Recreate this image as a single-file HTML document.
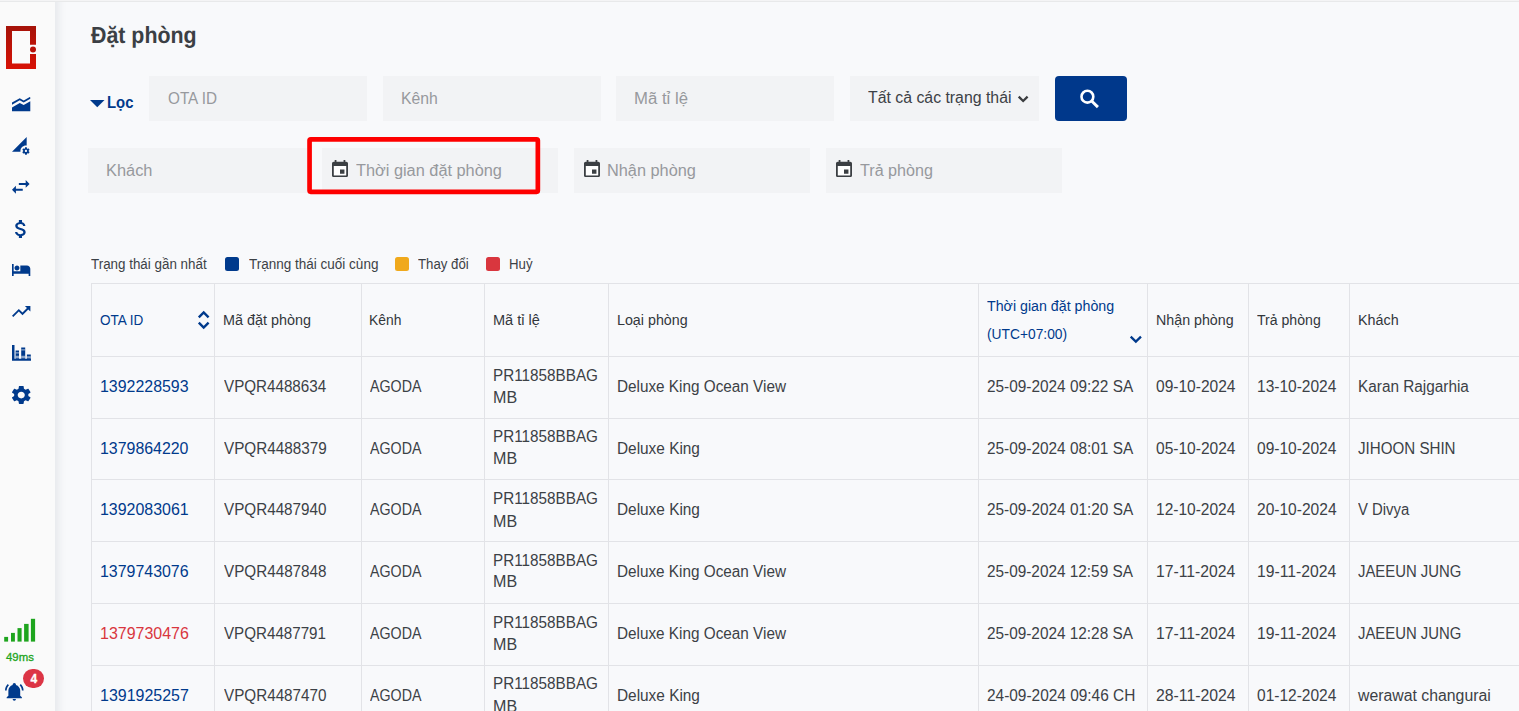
<!DOCTYPE html>
<html lang="vi">
<head>
<meta charset="utf-8">
<title>Đặt phòng</title>
<style>
*{box-sizing:border-box;margin:0;padding:0}
html,body{width:1519px;height:711px;overflow:hidden;background:#f8f9fb}
body{font-family:"Liberation Sans",sans-serif;color:#3c4146;position:relative;font-size:16px}
.topline{position:absolute;left:0;top:0;width:1519px;height:2px;background:linear-gradient(#f4f4f5 0,#f4f4f5 50%,#e8e9ea 50%,#e8e9ea 100%);z-index:5}
.side{position:absolute;left:0;top:-20px;width:55px;height:760px;background:#fafafa;box-shadow:2px 0 10px rgba(30,40,60,.10)}
svg{position:absolute;display:block;overflow:visible}
.ms{position:absolute;left:6px;top:651px;font-size:11px;color:#1ea51e;line-height:13px;white-space:nowrap;-webkit-text-stroke:.3px #1ea51e}
.badge{position:absolute;left:23px;top:669px;width:21px;height:19px;border-radius:10px;background:#dc3545}
.badge span{position:absolute;left:7.400px;top:.9px;-webkit-text-stroke:.3px #fff;color:#fff;font-size:12px;font-weight:bold;line-height:19px}
h1{position:absolute;left:90.5px;top:19.5px;font-size:23.4px;transform:rotate(0.03deg);transform-origin:0 50%;line-height:30px;font-weight:bold;color:#3b3f44;white-space:nowrap}
.loc{position:absolute;left:106.5px;top:91.7px;font-size:16px;font-weight:bold;color:#003a8c;line-height:22px;white-space:nowrap}
.inp{position:absolute;height:45px;background:#f2f3f5;color:#97999d;font-size:16px;line-height:45px;white-space:nowrap}
.inp>span{position:absolute;top:0}
.sel{color:#3c4146}
.btn{position:absolute;left:1055px;top:76px;width:72px;height:45px;background:#00388b;border-radius:4px}
.red{position:absolute;left:307px;top:137px;width:233px;height:57px;border:4.5px solid #fe0000;border-radius:3px}
.legend{position:absolute;top:254px;font-size:14px;line-height:20px;color:#3c4146;white-space:nowrap}
.sq{position:absolute;top:257.200px;width:13.500px;height:13.800px;border-radius:2.500px}
table{position:absolute;left:91px;top:283px;border-collapse:separate;border-spacing:0;table-layout:fixed;width:1500px}
th,td{border-left:1px solid #e2e3e7;border-top:1px solid #e2e3e7;padding:0 0 0 8px;text-align:left;vertical-align:middle;font-weight:normal;overflow:hidden;white-space:nowrap}
th{height:73px;font-size:14px;line-height:28px;color:#33373b;position:relative}
td{height:62px;font-size:16px;line-height:22.4px;color:#3c4146}
.h1 td{height:61.6px}.h2 td{height:61.45px}
th.s{color:#003a8c}
td.l{color:#003a8c}
td:nth-child(1){padding-left:7.5px}td:nth-child(2){padding-left:8.5px}td:nth-child(3){padding-left:7.9px}td:nth-child(4){padding-left:7.8px}td:nth-child(5){padding-left:7.5px}td:nth-child(8){padding-left:8.2px}
th:nth-child(1){padding-left:7.6px}th:nth-child(3){padding-left:7.3px}th:nth-child(5){padding-left:7.6px}th:nth-child(7){padding-left:7.9px}th:nth-child(8){padding-left:8.3px}th:nth-child(9){padding-left:7.7px}
td.r{color:#d9363e}
td i{position:relative;font-style:normal;display:inline-block}
.x{display:inline-block;transform-origin:0 50%;white-space:nowrap}
</style>
</head>
<body>
<div class="topline"></div>
<div class="side"></div>
<!-- logo -->
<svg style="left:6px;top:26px" width="30" height="43" viewBox="0 0 30 43"><defs><linearGradient id="lg" x1="0" y1="0" x2="0" y2="1"><stop offset="0" stop-color="#a51309"/><stop offset="1" stop-color="#d81206"/></linearGradient></defs><path fill="url(#lg)" fill-rule="evenodd" d="M0 0H30V18.7H24V5H6V37.5H24V28H30V43H0Z"/><circle cx="27" cy="23.4" r="3" fill="#b8120a"/></svg>
<!-- nav icons -->
<svg style="left:11.800px;top:96.700px" width="18.300" height="14.200" viewBox="0 0 18.300 14.200" fill="#003a8c"><path d="M0 5.500L7.750 1.200 11.700 3.600 17.800 0 18.300 .5V1.800L11.700 5.400 7.750 3.350 0 7.700Z"/><path d="M0 10.400L7.750 6.100 11.700 8.100 18.300 4.300V14.200H0Z"/></svg>
<svg style="left:12.1px;top:137.3px" width="17.64" height="17.64" viewBox="0 0 24 24" fill="#003a8c"><path d="M18.99 11.5c.34 0 .67.03 1 .07L20 0 0 20h11.56c-.04-.33-.07-.66-.07-1 0-4.14 3.36-7.5 7.5-7.5zm3.71 7.99c.02-.16.04-.32.04-.49 0-.17-.01-.33-.04-.49l1.06-.83c.09-.08.12-.21.06-.32l-1-1.73c-.06-.11-.19-.15-.31-.11l-1.24.5c-.26-.2-.54-.37-.85-.49l-.19-1.32c-.01-.12-.12-.21-.24-.21h-2c-.12 0-.23.09-.25.21l-.19 1.32c-.3.13-.59.29-.85.49l-1.24-.5c-.11-.04-.24 0-.31.11l-1 1.73c-.06.11-.04.24.06.32l1.06.83c-.02.16-.03.32-.03.49 0 .17.01.33.03.49l-1.06.83c-.09.08-.12.21-.06.32l1 1.73c.06.11.19.15.31.11l1.24-.5c.26.2.54.37.85.49l.19 1.32c.02.12.12.21.25.21h2c.12 0 .23-.09.25-.21l.19-1.32c.3-.13.59-.29.84-.49l1.25.5c.11.04.24 0 .31-.11l1-1.73c.06-.11.03-.24-.06-.32l-1.07-.83zm-3.710 1.010c-.83 0-1.5-.67-1.5-1.5s.67-1.5 1.500-1.500 1.5.67 1.500 1.500-.67 1.500-1.500 1.500z"/></svg>
<svg style="left:12.1px;top:180.4px" width="17.6" height="13.7" viewBox="3 5 18 14" fill="#003a8c"><path d="M6.99 11L3 15l3.990 4v-3H14v-2H6.990v-3zM21 9l-3.990-4v3H10v2h7.010v3L21 9z"/></svg>
<svg style="left:15.3px;top:219.8px" width="10.7" height="18.1" viewBox="6.3 3 10.2 18" preserveAspectRatio="none" fill="#003a8c"><path d="M11.8 10.9c-2.270-.59-3-1.200-3-2.150 0-1.090 1.010-1.850 2.700-1.850 1.780 0 2.440.85 2.500 2.100h2.210c-.07-1.720-1.120-3.300-3.210-3.810V3h-3v2.160c-1.940.42-3.500 1.680-3.500 3.610 0 2.310 1.910 3.460 4.700 4.130 2.500.6 3 1.480 3 2.410 0 .69-.49 1.790-2.700 1.790-2.060 0-2.870-.92-2.980-2.100h-2.200c.12 2.190 1.760 3.420 3.680 3.830V21h3v-2.150c1.950-.37 3.500-1.500 3.500-3.550 0-2.840-2.430-3.810-4.700-4.400z"/></svg>
<svg style="left:11.800px;top:263.800px" width="18.300" height="12.100" viewBox="1 5 22 15" preserveAspectRatio="none" fill="#003a8c"><path d="M7 13c1.660 0 3-1.340 3-3S8.660 7 7 7s-3 1.340-3 3 1.340 3 3 3zm12-6h-8v7H3V5H1v15h2v-3h18v3h2v-9c0-2.210-1.790-4-4-4z"/></svg>
<svg style="left:12.1px;top:306.3px" width="18.4" height="11" viewBox="2 6 20 12" preserveAspectRatio="none" fill="#003a8c"><path d="M16 6l2.290 2.290-4.880 4.880-4-4L2 16.590 3.410 18l6-6 4 4 6.300-6.290L22 12V6z"/></svg>
<svg style="left:11.65px;top:345.1px" width="19" height="15.8" viewBox="0 0 19 15.8" fill="#003a8c"><path d="M0 0H2.500V13.800H19V15.800H0Z"/><path d="M3.600 5.600H7V13.800H3.600ZM9.200 2.500H13.200V13.800H9.200ZM14.900 9.600H18.800V13.800H14.900Z"/><path fill="#fafafa" fill-opacity=".55" d="M3.600 7.300H7V8.400H3.600ZM3.600 10.700H7V12.900H3.600ZM9.200 4.300H13.200V5.400H9.200ZM9.200 10.700H13.200V12.900H9.200ZM14.900 11.300H18.800V12.900H14.900Z"/></svg>
<svg style="left:11.65px;top:385.9px" width="18.5" height="18" viewBox="2.66 2.4 18.68 19.2" preserveAspectRatio="none" fill="#003a8c"><path d="M19.140 12.940c.04-.3.06-.61.06-.94 0-.32-.02-.64-.07-.94l2.030-1.580c.18-.14.23-.41.12-.61l-1.920-3.320c-.12-.22-.37-.29-.59-.22l-2.390.96c-.5-.38-1.030-.7-1.620-.94l-.36-2.540c-.04-.24-.24-.41-.48-.41h-3.840c-.24 0-.43.17-.47.41l-.36 2.540c-.59.24-1.130.57-1.620.94l-2.390-.96c-.22-.08-.47 0-.59.22L2.740 8.870c-.12.21-.08.47.12.61l2.030 1.580c-.05.3-.09.63-.09.940s.02.64.07.940l-2.030 1.580c-.18.14-.23.41-.12.610l1.920 3.320c.12.22.37.29.59.22l2.390-.96c.5.38 1.030.7 1.620.940l.36 2.540c.05.24.24.41.48.41h3.840c.24 0 .44-.17.47-.41l.36-2.540c.59-.24 1.130-.56 1.620-.94l2.390.96c.22.08.47 0 .59-.22l1.920-3.320c.12-.22.07-.47-.12-.61l-2.010-1.580zM12 15.600c-1.980 0-3.600-1.620-3.600-3.600s1.620-3.600 3.600-3.600 3.600 1.620 3.600 3.600-1.620 3.600-3.600 3.600z"/></svg>
<!-- signal -->
<svg style="left:4px;top:618px" width="32" height="24" viewBox="0 0 32 24" fill="#1ea51e"><rect x=".2" y="18.900" width="3.900" height="4.700"/><rect x="7" y="14.900" width="3.900" height="8.700"/><rect x="13.500" y="10.100" width="4.100" height="13.500"/><rect x="20.100" y="5.900" width="4.500" height="17.700"/><rect x="26.900" y=".8" width="4.200" height="22.800"/></svg>
<div class="ms"><span class="x" style="transform:scaleX(1.0358)">49ms</span></div>
<svg style="left:5px;top:683px" width="18.600" height="17.700" viewBox="1 2 22 21" preserveAspectRatio="none" fill="#003a8c"><path d="M21,19V20H3V19L5,17V11C5,7.900 7.030,5.170 10,4.290C10,4.190 10,4.100 10,4A2,2 0 0,1 12,2A2,2 0 0,1 14,4C14,4.100 14,4.190 14,4.290C16.970,5.170 19,7.900 19,11V17L21,19M14,21A2,2 0 0,1 12,23A2,2 0 0,1 10,21M19.750,3.190L18.330,4.610C20.040,6.300 21,8.600 21,11H23C23,8.070 21.840,5.250 19.750,3.190M1,11H3C3,8.600 3.960,6.300 5.670,4.610L4.250,3.190C2.160,5.250 1,8.070 1,11Z"/></svg>
<div class="badge"><span>4</span></div>

<h1><span class="x" style="transform:scaleX(0.9131)">Đặt phòng</span></h1>
<svg style="left:89.500px;top:100px" width="14.500" height="7.200" viewBox="0 0 14.500 7.200" fill="#003a8c"><path d="M0 0H14.500L7.250 7.200Z"/></svg>
<div class="loc"><span class="x" style="transform:scaleX(0.9308)">Lọc</span></div>
<div class="inp" style="left:149px;top:76px;width:218px"><span style="left:18.500px"><span class="x" style="transform:scaleX(0.9553)">OTA ID</span></span></div>
<div class="inp" style="left:383px;top:76px;width:218px"><span style="left:17.600px"><span class="x" style="transform:scaleX(0.9865)">Kênh</span></span></div>
<div class="inp" style="left:616px;top:76px;width:218px"><span style="left:18px"><span class="x" style="transform:scaleX(1.0463)">Mã tỉ lệ</span></span></div>
<div class="inp sel" style="left:850px;top:76px;width:189px"><span style="left:18.300px;top:-1px"><span class="x" style="transform:scaleX(0.9897)">Tất cả các trạng thái</span></span></div>
<svg style="left:1018px;top:95.800px" width="10.300" height="6.300" viewBox="0 0 10.300 6.300" fill="none" stroke="#3a3c3f" stroke-width="2.300"><path d="M.7 .7L5.150 5 9.600 .7"/></svg>
<div class="btn"></div>
<svg style="left:1075px;top:85px" width="30" height="28" viewBox="1075 85 30 28" fill="none" stroke="#fff" stroke-width="2.600"><circle cx="1087.400" cy="96.700" r="5.900"/><path d="M1091.400 100.700L1097.900 107.100" stroke-width="2.900"/></svg>
<div class="inp" style="left:88px;top:148px;width:219px"><span style="left:17.600px"><span class="x" style="transform:scaleX(1.0240)">Khách</span></span></div>
<div class="inp" style="left:322px;top:148px;width:236px"><span style="left:34.300px"><span class="x" style="transform:scaleX(1.0201)">Thời gian đặt phòng</span></span></div>
<div class="inp" style="left:574px;top:148px;width:236px"><span style="left:33.300px"><span class="x" style="transform:scaleX(1.0197)">Nhận phòng</span></span></div>
<div class="inp" style="left:826px;top:148px;width:236px"><span style="left:34.300px"><span class="x" style="transform:scaleX(1.0089)">Trả phòng</span></span></div>
<svg style="left:331.6px;top:159.800px" width="16" height="17.100" viewBox="3 1 18 20" preserveAspectRatio="none"><rect x="5" y="8" width="14" height="11" fill="#fff"/><path fill="#3b3f43" d="M17 12h-5v5h5v-5zM16 1v2H8V1H6v2H5c-1.110 0-1.990.9-1.990 2L3 19c0 1.100.89 2 2 2h14c1.100 0 2-.9 2-2V5c0-1.100-.9-2-2-2h-1V1h-2zm3 18H5V8h14v11z"/></svg>
<svg style="left:583.6px;top:159.800px" width="16" height="17.100" viewBox="3 1 18 20" preserveAspectRatio="none"><rect x="5" y="8" width="14" height="11" fill="#fff"/><path fill="#3b3f43" d="M17 12h-5v5h5v-5zM16 1v2H8V1H6v2H5c-1.110 0-1.990.9-1.990 2L3 19c0 1.100.89 2 2 2h14c1.100 0 2-.9 2-2V5c0-1.100-.9-2-2-2h-1V1h-2zm3 18H5V8h14v11z"/></svg>
<svg style="left:835.6px;top:159.800px" width="16" height="17.100" viewBox="3 1 18 20" preserveAspectRatio="none"><rect x="5" y="8" width="14" height="11" fill="#fff"/><path fill="#3b3f43" d="M17 12h-5v5h5v-5zM16 1v2H8V1H6v2H5c-1.110 0-1.990.9-1.990 2L3 19c0 1.100.89 2 2 2h14c1.100 0 2-.9 2-2V5c0-1.100-.9-2-2-2h-1V1h-2zm3 18H5V8h14v11z"/></svg>
<svg style="left:300px;top:130px" width="250" height="72" viewBox="300 130 250 72"><rect x="309.550" y="139.300" width="228.300" height="52.500" rx="1.200" fill="none" stroke="#fe0000" stroke-width="4.700"/></svg>
<div class="legend" style="left:91px"><span class="x" style="transform:scaleX(0.9563)">Trạng thái gần nhất</span></div>
<div class="sq" style="left:225px;background:#003a8c"></div>
<div class="legend" style="left:248.600px"><span class="x" style="transform:scaleX(0.9648)">Trạnng thái cuối cùng</span></div>
<div class="sq" style="left:395px;background:#f0a91c"></div>
<div class="legend" style="left:418px"><span class="x" style="transform:scaleX(0.9447)">Thay đổi</span></div>
<div class="sq" style="left:486px;background:#d9363e"></div>
<div class="legend" style="left:509px"><span class="x" style="transform:scaleX(0.9447)">Huỷ</span></div>
<table>
<colgroup><col style="width:123px"><col style="width:147px"><col style="width:123px"><col style="width:124px"><col style="width:370px"><col style="width:169px"><col style="width:101px"><col style="width:101px"><col></colgroup>
<thead><tr><th class="s"><span class="x" style="transform:scaleX(0.9672)">OTA ID</span></th><th><span class="x" style="transform:scaleX(1.0277)">Mã đặt phòng</span></th><th><span class="x" style="transform:scaleX(0.9889)">Kênh</span></th><th><span class="x" style="transform:scaleX(1.0392)">Mã tỉ lệ</span></th><th><span class="x" style="transform:scaleX(1.0192)">Loại phòng</span></th><th class="s"><span class="x" style="transform:scaleX(1.0157)">Thời gian đặt phòng</span><br><span class="x" style="transform:scaleX(0.9851)">(UTC+07:00)</span></th><th><span class="x" style="transform:scaleX(1.0173)">Nhận phòng</span></th><th><span class="x" style="transform:scaleX(1.0065)">Trả phòng</span></th><th><span class="x" style="transform:scaleX(1.0254)">Khách</span></th></tr></thead>
<tbody>
<tr class="h1"><td class="l"><span class="x" style="transform:scaleX(0.9951)">1392228593</span></td><td><span class="x" style="transform:scaleX(0.9490)">VPQR4488634</span></td><td><span class="x" style="transform:scaleX(0.8898)">AGODA</span></td><td><span class="x" style="transform:scaleX(0.9544)">PR11858BBAG</span><br><span class="x" style="transform:scaleX(1.0052)">MB</span></td><td><span class="x" style="transform:scaleX(0.9562)">Deluxe King Ocean View</span></td><td><span class="x" style="transform:scaleX(0.9611)">25-09-2024 09:22 SA</span></td><td><span class="x" style="transform:scaleX(0.9704)">09-10-2024</span></td><td><span class="x" style="transform:scaleX(0.9693)">13-10-2024</span></td><td><span class="x" style="transform:scaleX(0.9591)">Karan Rajgarhia</span></td></tr>
<tr class="h2"><td class="l"><span class="x" style="transform:scaleX(0.9941)">1379864220</span></td><td><span class="x" style="transform:scaleX(0.9537)">VPQR4488379</span></td><td><span class="x" style="transform:scaleX(0.8898)">AGODA</span></td><td><span class="x" style="transform:scaleX(0.9544)">PR11858BBAG</span><br><i style="top:-1px"><span class="x" style="transform:scaleX(1.0052)">MB</span></i></td><td><span class="x" style="transform:scaleX(0.9609)">Deluxe King</span></td><td><span class="x" style="transform:scaleX(0.9611)">25-09-2024 08:01 SA</span></td><td><span class="x" style="transform:scaleX(0.9704)">05-10-2024</span></td><td><span class="x" style="transform:scaleX(0.9699)">09-10-2024</span></td><td><span class="x" style="transform:scaleX(0.9459)">JIHOON SHIN</span></td></tr>
<tr><td class="l"><span class="x" style="transform:scaleX(0.9965)">1392083061</span></td><td><span class="x" style="transform:scaleX(0.9520)">VPQR4487940</span></td><td><span class="x" style="transform:scaleX(0.8898)">AGODA</span></td><td><span class="x" style="transform:scaleX(0.9544)">PR11858BBAG</span><br><span class="x" style="transform:scaleX(1.0052)">MB</span></td><td><span class="x" style="transform:scaleX(0.9609)">Deluxe King</span></td><td><span class="x" style="transform:scaleX(0.9611)">25-09-2024 01:20 SA</span></td><td><span class="x" style="transform:scaleX(0.9695)">12-10-2024</span></td><td><span class="x" style="transform:scaleX(0.9718)">20-10-2024</span></td><td><span class="x" style="transform:scaleX(0.9292)">V Divya</span></td></tr>
<tr><td class="l"><span class="x" style="transform:scaleX(0.9951)">1379743076</span></td><td><span class="x" style="transform:scaleX(0.9526)">VPQR4487848</span></td><td><span class="x" style="transform:scaleX(0.8898)">AGODA</span></td><td><span class="x" style="transform:scaleX(0.9544)">PR11858BBAG</span><br><i style="top:-1.6px"><span class="x" style="transform:scaleX(1.0052)">MB</span></i></td><td><span class="x" style="transform:scaleX(0.9562)">Deluxe King Ocean View</span></td><td><span class="x" style="transform:scaleX(0.9592)">25-09-2024 12:59 SA</span></td><td><span class="x" style="transform:scaleX(0.9826)">17-11-2024</span></td><td><span class="x" style="transform:scaleX(0.9826)">19-11-2024</span></td><td><span class="x" style="transform:scaleX(0.9294)">JAEEUN JUNG</span></td></tr>
<tr><td class="r"><span class="x" style="transform:scaleX(0.9978)">1379730476</span></td><td><span class="x" style="transform:scaleX(0.9473)">VPQR4487791</span></td><td><span class="x" style="transform:scaleX(0.8898)">AGODA</span></td><td><span class="x" style="transform:scaleX(0.9544)">PR11858BBAG</span><br><i style="top:-1px"><span class="x" style="transform:scaleX(1.0052)">MB</span></i></td><td><span class="x" style="transform:scaleX(0.9562)">Deluxe King Ocean View</span></td><td><span class="x" style="transform:scaleX(0.9592)">25-09-2024 12:28 SA</span></td><td><span class="x" style="transform:scaleX(0.9826)">17-11-2024</span></td><td><span class="x" style="transform:scaleX(0.9826)">19-11-2024</span></td><td><span class="x" style="transform:scaleX(0.9294)">JAEEUN JUNG</span></td></tr>
<tr><td class="l"><span class="x" style="transform:scaleX(0.9975)">1391925257</span></td><td><span class="x" style="transform:scaleX(0.9520)">VPQR4487470</span></td><td><span class="x" style="transform:scaleX(0.8898)">AGODA</span></td><td><i style="top:-0.7px"><span class="x" style="transform:scaleX(0.9544)">PR11858BBAG</span></i><br><i style="top:-1px"><span class="x" style="transform:scaleX(1.0052)">MB</span></i></td><td><span class="x" style="transform:scaleX(0.9609)">Deluxe King</span></td><td><span class="x" style="transform:scaleX(0.9637)">24-09-2024 09:46 CH</span></td><td><span class="x" style="transform:scaleX(0.9867)">28-11-2024</span></td><td><span class="x" style="transform:scaleX(0.9699)">01-12-2024</span></td><td><span class="x" style="transform:scaleX(0.9886)">werawat changurai</span></td></tr>
</tbody>
</table>
<!-- sort icons -->
<svg style="left:197.700px;top:310.800px" width="11.400" height="18" viewBox="0 0 11.400 18" fill="none" stroke="#003a8c" stroke-width="2.400"><path d="M.8 6.400L5.700 1.500 10.600 6.400M.8 11.600L5.700 16.500 10.600 11.600"/></svg>
<svg style="left:1130px;top:336px" width="11.700" height="6.700" viewBox="0 0 11.700 6.700" fill="none" stroke="#003a8c" stroke-width="2.300"><path d="M.7 .7L5.850 5.600 11 .7"/></svg>
</body>
</html>
